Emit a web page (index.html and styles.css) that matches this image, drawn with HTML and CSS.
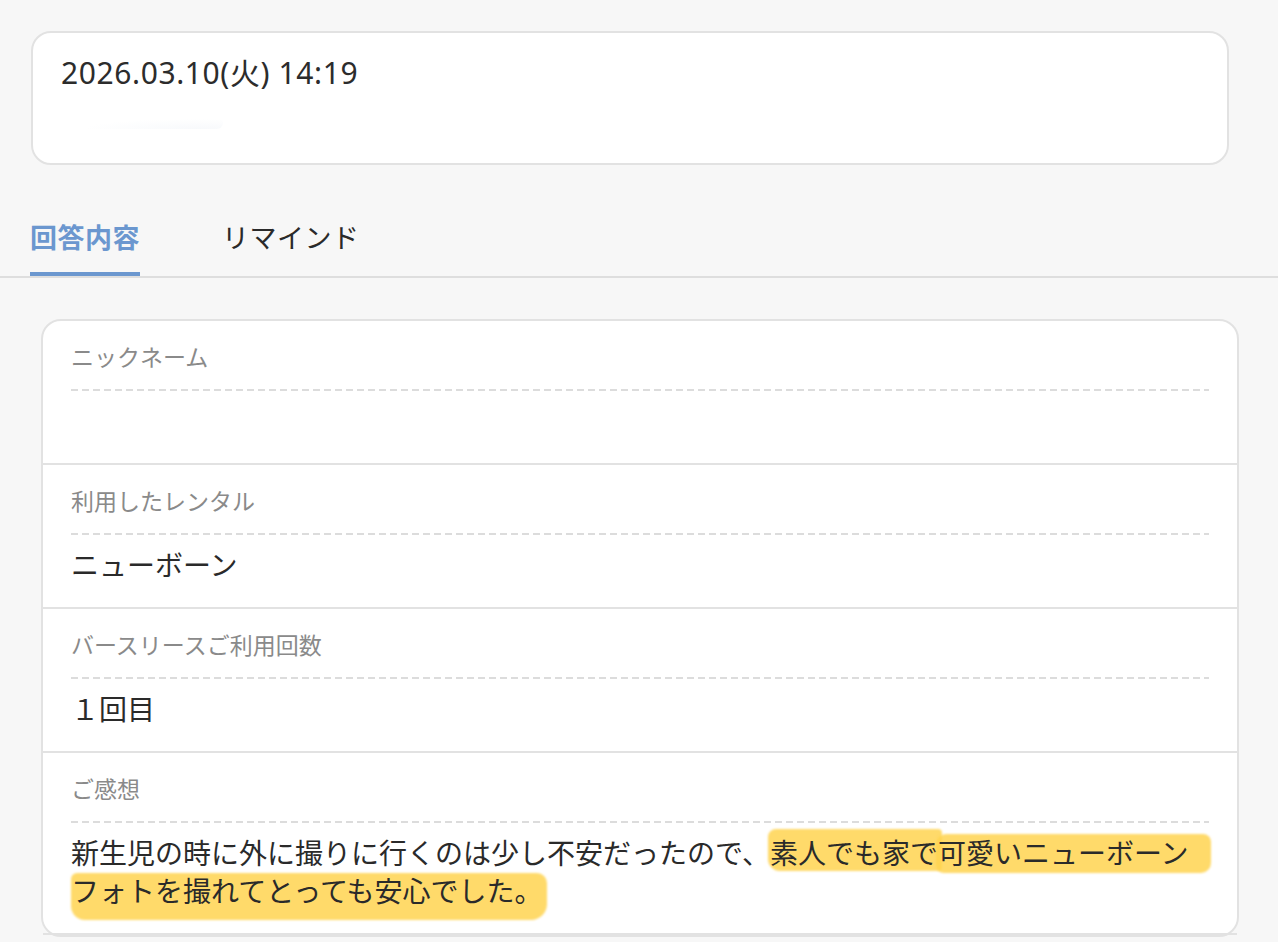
FILE: index.html
```html
<!DOCTYPE html>
<html lang="ja">
<head>
<meta charset="utf-8">
<title>回答内容</title>
<link rel="stylesheet" href="styles.css">
</head>
<body>
<div class="top-card">
  <div class="date">2026.03.10(火) 14:19</div>
  <div class="sub"><span class="blur"></span></div>
</div>

<nav class="tabs">
  <div class="tab active">回答内容</div>
  <div class="tab">リマインド</div>
</nav>

<section class="answers">
  <div class="row">
    <div class="label">ニックネーム</div>
    <div class="dash"></div>
    <div class="value empty"></div>
  </div>
  <div class="row">
    <div class="label">利用したレンタル</div>
    <div class="dash"></div>
    <div class="value">ニューボーン</div>
  </div>
  <div class="row">
    <div class="label">バースリースご利用回数</div>
    <div class="dash"></div>
    <div class="value">１回目</div>
  </div>
  <div class="row">
    <div class="label">ご感想</div>
    <div class="dash"></div>
    <div class="value">新生児の時に外に撮りに行くのは少し不安だったので、<span class="mark mark-a">素人でも家で</span><span class="mark mark-b">可愛いニューボーン</span><span class="mark mark-c">フォトを撮れてとっても安心でした。</span></div>
  </div>
</section>
</body>
</html>
```

FILE: styles.css
```css
* { box-sizing: border-box; }

html, body {
  margin: 0;
  padding: 0;
  background: #f7f7f7;
  font-family: "Noto Sans CJK JP", "Noto Sans", sans-serif;
  color: #2e2e2e;
}

body { overflow: hidden; }

.top-card {
  margin: 31px 49px 0 31px;
  background: #fff;
  border: 2px solid #e2e2e2;
  border-radius: 20px;
  padding: 20px 28px 30px;
}

.date {
  font-family: "Noto Sans", "Noto Sans CJK JP", sans-serif;
  font-size: 30px;
  line-height: 40px;
  letter-spacing: 0.6px;
  color: #2c2c2c;
}

.sub {
  height: 40px;
  position: relative;
}

.blur {
  position: absolute;
  left: 2px;
  top: 24px;
  width: 160px;
  height: 12px;
  border-radius: 8px;
  background: radial-gradient(ellipse at 85% 100%, rgba(225, 232, 242, 0.25), transparent 60%);
}

.tabs {
  display: flex;
  gap: 82px;
  padding: 54px 0 0 30px;
  border-bottom: 2px solid #dedede;
}

.tab {
  font-size: 27px;
  line-height: 36px;
  padding-bottom: 17px;
  border-bottom: 4px solid transparent;
  color: #2a2a2a;
  letter-spacing: 0.5px;
}

.tab.active {
  color: #6b97cf;
  font-weight: 700;
  border-bottom-color: #6b97cf;
}

.answers {
  margin: 41px 39px 0 41px;
  background: #fff;
  border: 2px solid #e2e2e2;
  border-radius: 20px;
}

.row {
  padding: 19px 28px 24px 28px;
  border-bottom: 2px solid #e2e2e2;
}

.label {
  font-size: 23px;
  line-height: 32px;
  color: #8a8a8a;
  margin-bottom: 17px;
}

.dash {
  height: 2px;
  background-image: repeating-linear-gradient(to right, #dcdcdc 0 7px, transparent 7px 11px);
}

.value {
  font-size: 28px;
  line-height: 38px;
  padding-top: 10px;
  color: #2a2a2a;
}

.value.empty { height: 48px; }

.mark {
  position: relative;
  z-index: 0;
}

.mark::before {
  content: "";
  position: absolute;
  z-index: -1;
  background: rgba(255, 212, 80, 0.85);
  filter: blur(1px);
}

.mark-a::before {
  left: -2px;
  right: -4px;
  top: -3px;
  bottom: 1px;
  border-radius: 8px 4px 4px 12px;
}

.mark-b::before {
  left: -2px;
  right: -22px;
  top: 2px;
  bottom: -1px;
  border-radius: 10px 8px 10px 8px;
}

.mark-c::before {
  left: 0;
  right: -4px;
  top: 3px;
  bottom: -10px;
  border-radius: 6px 10px 16px 14px;
}
```
